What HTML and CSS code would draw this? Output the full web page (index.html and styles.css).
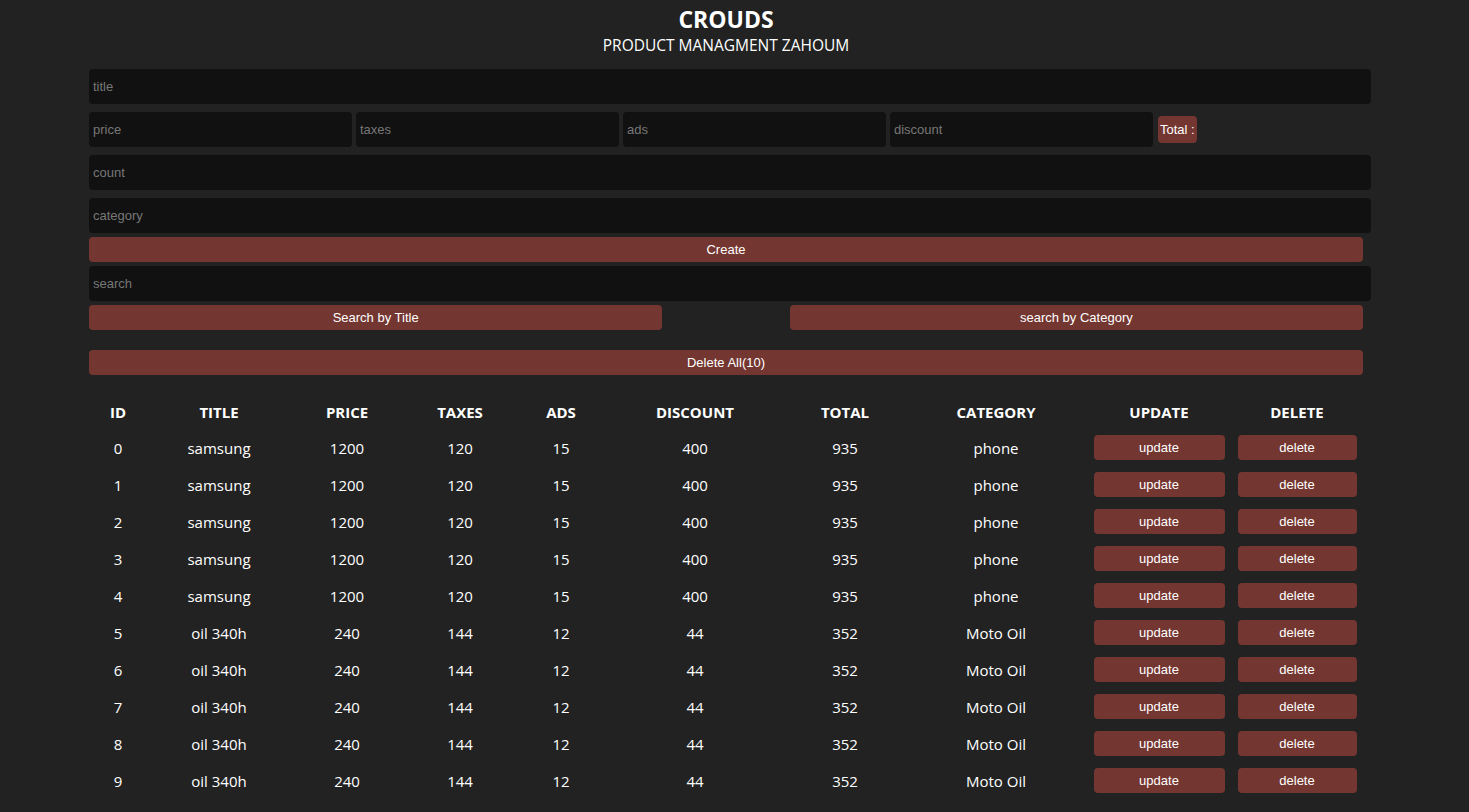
FILE: index.html
```html
<!DOCTYPE html>
<html lang="en">
<head>
<meta charset="utf-8">
<title>CROUDS</title>
<link rel="stylesheet" href="styles.css">
</head>
<body>
<div class="crud">
  <div class="head">
    <h2>CROUDS</h2>
    <p>PRODUCT MANAGMENT ZAHOUM</p>
  </div>
  <div class="inputs">
    <input type="text" placeholder="title">
    <div class="price">
      <input type="number" placeholder="price">
      <input type="number" placeholder="taxes">
      <input type="number" placeholder="ads">
      <input type="number" placeholder="discount">
      <small class="total">Total :</small>
    </div>
    <input type="number" placeholder="count">
    <input type="text" placeholder="category">
    <button class="btn">Create</button>
  </div>
  <div class="outputs">
    <div class="searchBlock">
      <input type="text" placeholder="search">
      <div class="btnSearch">
        <button class="btn half">Search by Title</button>
        <button class="btn half">search by Category</button>
      </div>
    </div>
    <div class="deleteAll">
      <button class="btn">Delete All(10)</button>
    </div>
    <table>
      <thead>
        <tr>
          <th class="c-id">ID</th>
          <th class="c-title">TITLE</th>
          <th class="c-price">PRICE</th>
          <th class="c-taxes">TAXES</th>
          <th class="c-ads">ADS</th>
          <th class="c-disc">DISCOUNT</th>
          <th class="c-total">TOTAL</th>
          <th class="c-cat">CATEGORY</th>
          <th class="c-upd">UPDATE</th>
          <th class="c-del">DELETE</th>
        </tr>
      </thead>
      <tbody>
        <tr><td>0</td><td>samsung</td><td>1200</td><td>120</td><td>15</td><td>400</td><td>935</td><td>phone</td><td><button class="btn small upd">update</button></td><td><button class="btn small">delete</button></td></tr>
        <tr><td>1</td><td>samsung</td><td>1200</td><td>120</td><td>15</td><td>400</td><td>935</td><td>phone</td><td><button class="btn small upd">update</button></td><td><button class="btn small">delete</button></td></tr>
        <tr><td>2</td><td>samsung</td><td>1200</td><td>120</td><td>15</td><td>400</td><td>935</td><td>phone</td><td><button class="btn small upd">update</button></td><td><button class="btn small">delete</button></td></tr>
        <tr><td>3</td><td>samsung</td><td>1200</td><td>120</td><td>15</td><td>400</td><td>935</td><td>phone</td><td><button class="btn small upd">update</button></td><td><button class="btn small">delete</button></td></tr>
        <tr><td>4</td><td>samsung</td><td>1200</td><td>120</td><td>15</td><td>400</td><td>935</td><td>phone</td><td><button class="btn small upd">update</button></td><td><button class="btn small">delete</button></td></tr>
        <tr><td>5</td><td>oil 340h</td><td>240</td><td>144</td><td>12</td><td>44</td><td>352</td><td>Moto Oil</td><td><button class="btn small upd">update</button></td><td><button class="btn small">delete</button></td></tr>
        <tr><td>6</td><td>oil 340h</td><td>240</td><td>144</td><td>12</td><td>44</td><td>352</td><td>Moto Oil</td><td><button class="btn small upd">update</button></td><td><button class="btn small">delete</button></td></tr>
        <tr><td>7</td><td>oil 340h</td><td>240</td><td>144</td><td>12</td><td>44</td><td>352</td><td>Moto Oil</td><td><button class="btn small upd">update</button></td><td><button class="btn small">delete</button></td></tr>
        <tr><td>8</td><td>oil 340h</td><td>240</td><td>144</td><td>12</td><td>44</td><td>352</td><td>Moto Oil</td><td><button class="btn small upd">update</button></td><td><button class="btn small">delete</button></td></tr>
        <tr><td>9</td><td>oil 340h</td><td>240</td><td>144</td><td>12</td><td>44</td><td>352</td><td>Moto Oil</td><td><button class="btn small upd">update</button></td><td><button class="btn small">delete</button></td></tr>
      </tbody>
    </table>
  </div>
</div>
</body>
</html>
```

FILE: styles.css
```css
* {
  box-sizing: content-box;
}

body {
  margin: 0;
  background: #222222;
  color: #ffffff;
  font-family: "Open Sans", "Noto Sans", sans-serif;
}

.crud {
  width: 1274px;
  margin-left: 89px;
  padding-bottom: 20px;
}

.head {
  text-align: center;
  padding-top: 4px;
  margin-bottom: 9px;
}

.head h2 {
  margin: 0;
  font-size: 23px;
  font-weight: 700;
  line-height: 30px;
}

.head p {
  margin: 0;
  font-size: 15.5px;
  line-height: 22px;
}

.inputs,
.searchBlock {
  display: flex;
  flex-direction: column;
}

input {
  display: block;
  width: 100%;
  height: 27px;
  padding: 4px;
  margin: 4px 0;
  border: none;
  outline: none;
  border-radius: 4px;
  background: #111111;
  color: #ffffff;
  font-family: "Liberation Sans", Arial, sans-serif;
  font-size: 13px;
}

input::placeholder {
  color: #777777;
}

.price {
  display: flex;
  align-items: center;
  gap: 4px;
}

.price input {
  width: 255px;
  flex: none;
}

.total {
  margin-left: 1px;
  padding: 0 2px;
  height: 27px;
  line-height: 27px;
  background: #743631;
  border-radius: 4px;
  font-family: "Liberation Sans", Arial, sans-serif;
  font-size: 13px;
}

.btn {
  display: block;
  width: 100%;
  height: 25px;
  padding: 0;
  border: none;
  border-radius: 4px;
  background: #743631;
  color: #ffffff;
  font-family: "Liberation Sans", Arial, sans-serif;
  font-size: 13px;
  cursor: pointer;
}

.btnSearch {
  display: flex;
  justify-content: space-between;
}

.btn.half {
  width: 45%;
}

.deleteAll {
  margin-top: 20px;
}

table {
  width: 100%;
  margin-top: 20px;
  border-collapse: collapse;
  table-layout: fixed;
  text-align: center;
}

th {
  height: 34px;
  padding: 0;
  font-size: 15px;
  font-weight: 700;
  text-transform: uppercase;
}

td {
  height: 25px;
  padding: 6px 0;
  font-size: 15px;
}

.c-id { width: 58px; }
.c-title { width: 144px; }
.c-price { width: 112px; }
.c-taxes { width: 114px; }
.c-ads { width: 88px; }
.c-disc { width: 180px; }
.c-total { width: 120px; }
.c-cat { width: 182px; }
.c-upd { width: 144px; }
.c-del { width: 132px; }

.btn.small {
  width: 119px;
  margin: 0 auto;
}

.btn.small.upd {
  width: 131px;
}
```
